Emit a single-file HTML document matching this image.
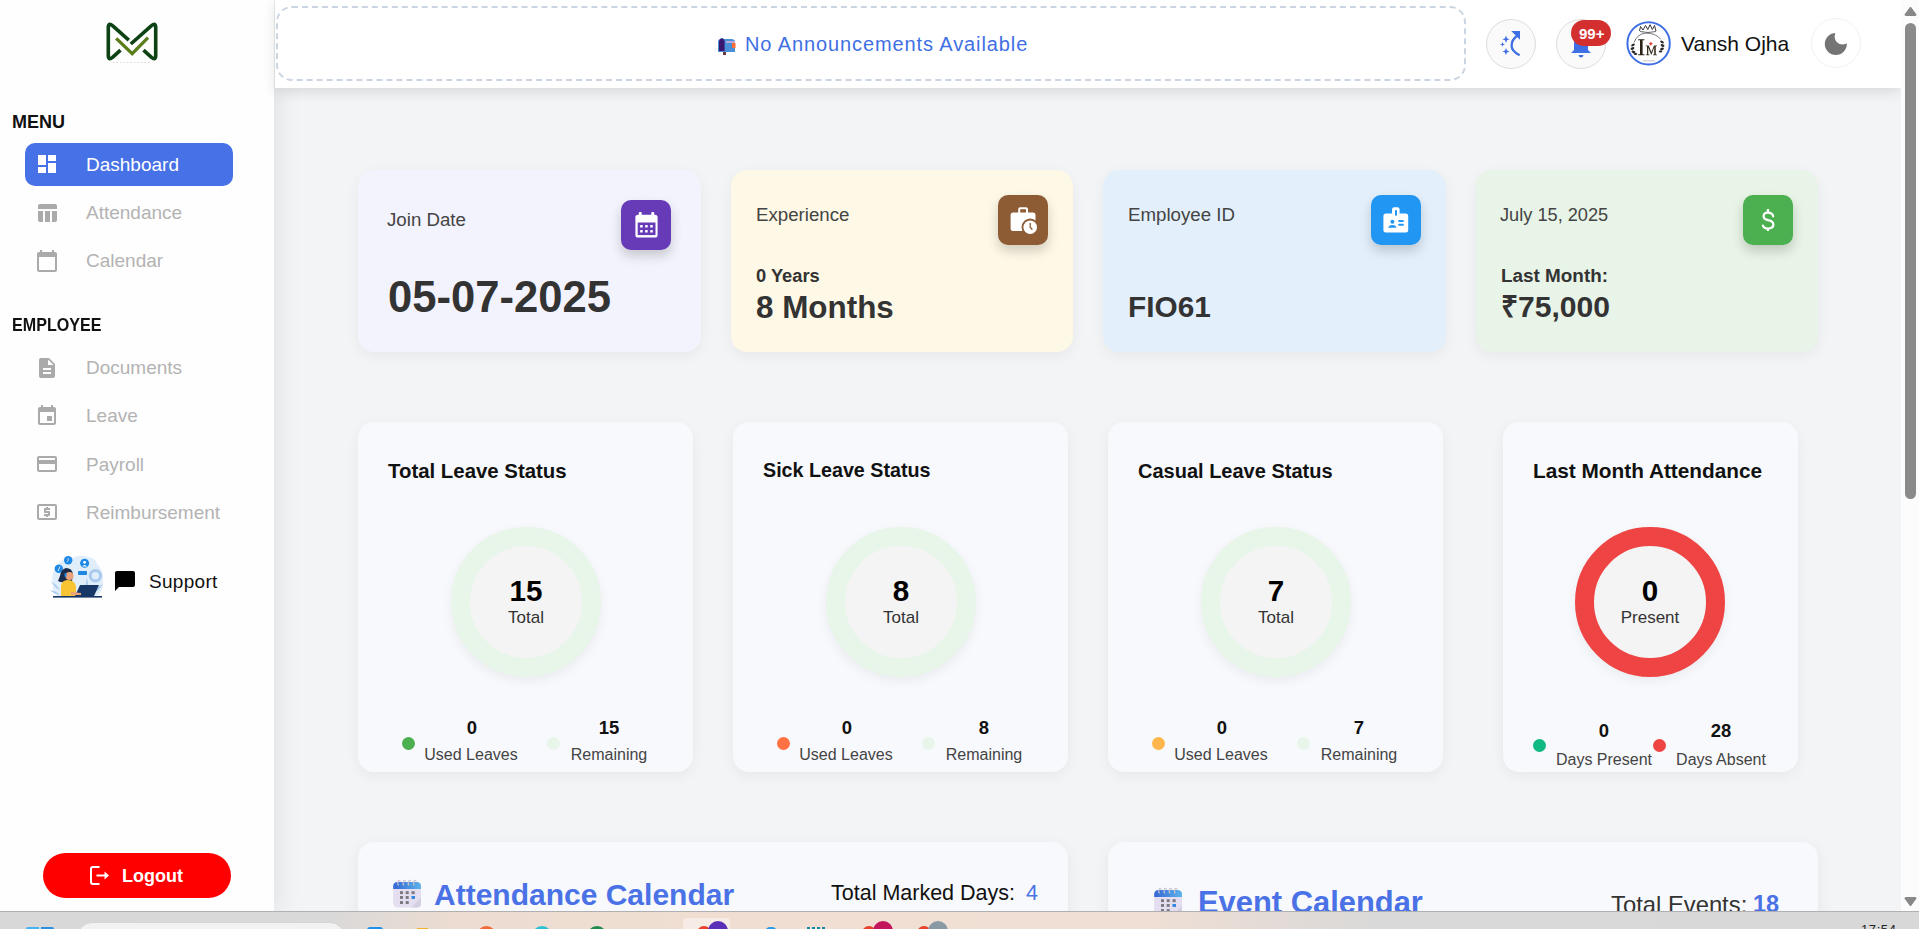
<!DOCTYPE html>
<html><head><meta charset="utf-8">
<style>
*{box-sizing:border-box;margin:0;padding:0}
html,body{width:1919px;height:929px;overflow:hidden}
body{position:relative;background:#f3f4f6;font-family:"Liberation Sans",sans-serif;color:#111}
.abs{position:absolute}
.t{position:absolute;white-space:nowrap;line-height:1}
#sidebar{position:absolute;left:0;top:0;width:274px;height:911px;background:#fefefe;box-shadow:3px 0 26px rgba(0,0,0,0.085);z-index:2}
#header{position:absolute;left:275px;top:0;width:1626px;height:88px;background:#fff;box-shadow:0 4px 12px rgba(0,0,0,0.11);z-index:3}
.nav{position:absolute;left:86px;font-size:19px;color:#b3b3b3;white-space:nowrap;line-height:1}
.ico{position:absolute;width:24px;height:24px}
.card{position:absolute;border-radius:16px;box-shadow:0 4px 14px rgba(0,0,0,0.05)}
.ibox{position:absolute;width:50px;height:50px;border-radius:10px;box-shadow:0 6px 12px rgba(0,0,0,0.18)}
.ctitle{font-size:18.7px;color:#444}
</style></head>
<body>
<div id="sidebar">
  <!-- logo -->
  <svg class="abs" style="left:106px;top:22px" width="53" height="41" viewBox="0 0 53 41">
    <g fill="none" stroke="#0d4314" stroke-width="3.6" stroke-linejoin="round">
      <path d="M22.8 18.2 L6.5 3.6 Q2.3 0.3 2.3 5.5 L2.3 33.5 Q2.3 38.7 6.5 35.4 L14.5 28.2"/>
      <path d="M24.8 22 L45.5 3.6 Q49.7 0.3 49.7 5.5 L49.7 33.5 Q49.7 38.7 45.5 35.4 L37.5 28.2"/>
    </g>
    <path d="M10.2 16.4 L26.2 31.6 L42 15.6" fill="none" stroke="#5b7d1c" stroke-width="3.3"/>
    <path d="M7 40.5 H44" stroke="#d0d0d0" stroke-width="0.8" stroke-dasharray="1.5 2"/>
  </svg>
  <div class="t" style="left:12px;top:113px;font-size:18px;font-weight:700;color:#111">MENU</div>
  <div class="abs" style="left:25px;top:143px;width:208px;height:43px;border-radius:10px;background:#4771e6"></div>
  <svg class="ico" style="left:35px;top:152px" viewBox="0 0 24 24"><path fill="#fff" d="M3 13h8V3H3v10zm0 8h8v-6H3v6zm10 0h8V11h-8v10zm0-18v6h8V3h-8z"/></svg>
  <div class="nav" style="top:155px;color:#fff">Dashboard</div>
  <svg class="ico" style="left:35px;top:201px" viewBox="0 0 24 24"><path fill="#aaa" d="M10 10.02h5V21h-5zM17 21h3c1.1 0 2-.9 2-2v-9h-5v11zm3-18H5c-1.1 0-2 .9-2 2v3h19V5c0-1.1-.9-2-2-2zM3 19c0 1.1.9 2 2 2h3V10H3v9z"/></svg>
  <div class="nav" style="top:203px">Attendance</div>
  <svg class="ico" style="left:35px;top:249px" viewBox="0 0 24 24"><path fill="#aaa" d="M20 3h-1V1h-2v2H7V1H5v2H4c-1.1 0-2 .9-2 2v16c0 1.1.9 2 2 2h16c1.1 0 2-.9 2-2V5c0-1.1-.9-2-2-2zm0 18H4V8h16v13z"/></svg>
  <div class="nav" style="top:251px">Calendar</div>

  <div class="t" style="left:11.5px;top:316px;font-size:18px;font-weight:700;color:#111;transform:scaleX(0.895);transform-origin:0 0">EMPLOYEE</div>
  <svg class="ico" style="left:35px;top:356px" viewBox="0 0 24 24"><path fill="#aaa" d="M14 2H6c-1.1 0-1.99.9-1.99 2L4 20c0 1.1.89 2 1.99 2H18c1.1 0 2-.9 2-2V8l-6-6zm2 16H8v-2h8v2zm0-4H8v-2h8v2zm-3-5V3.5L18.5 9H13z"/></svg>
  <div class="nav" style="top:358px">Documents</div>
  <svg class="ico" style="left:35px;top:404px" viewBox="0 0 24 24"><path fill="#aaa" d="M17 12h-5v5h5v-5zM16 1v2H8V1H6v2H5c-1.11 0-1.99.9-1.99 2L3 19c0 1.1.89 2 2 2h14c1.1 0 2-.9 2-2V5c0-1.1-.9-2-2-2h-1V1h-2zm3 18H5V8h14v11z"/></svg>
  <div class="nav" style="top:406px">Leave</div>
  <svg class="ico" style="left:35px;top:452px" viewBox="0 0 24 24"><path fill="#aaa" d="M20 4H4c-1.11 0-1.99.89-1.99 2L2 18c0 1.11.89 2 2 2h16c1.11 0 2-.89 2-2V6c0-1.11-.89-2-2-2zm0 14H4v-6h16v6zm0-10H4V6h16v2z"/></svg>
  <div class="nav" style="top:455px">Payroll</div>
  <svg class="ico" style="left:35px;top:500px" viewBox="0 0 24 24"><path fill="#aaa" d="M11 17h2v-1h1c.55 0 1-.45 1-1v-3c0-.55-.45-1-1-1h-3v-1h4V8h-2V7h-2v1h-1c-.55 0-1 .45-1 1v3c0 .55.45 1 1 1h3v1H9v2h2v1zm9-13H4c-1.11 0-1.990.89-1.99 2L2 18c0 1.11.89 2 2 2h16c1.11 0 2-.89 2-2V6c0-1.11-.89-2-2-2zm0 14H4V6h16v12z"/></svg>
  <div class="nav" style="top:503px">Reimbursement</div>

  <!-- support -->
  <svg class="abs" style="left:49px;top:554px" width="56" height="45" viewBox="0 0 56 45">
    <path d="M4 30 Q1 18 9 11 Q14 2 24 4 Q30 0 38 3 Q46 3 48 10 Q55 16 54 28 Q54 38 48 42 L8 42 Q3 38 4 30Z" fill="#dfeefa"/>
    <g fill="#a9c9ee"><path d="M2 27 Q8 31 11 36 Q6 34 2 27Z"/><path d="M1 36 Q7 37 11 41 Q5 40 1 36Z"/><path d="M54 30 Q48 33 45 38 Q50 37 54 30Z"/><path d="M38 24 Q36 30 37 35 Q40 30 38 24Z"/></g>
    <circle cx="19.2" cy="6.3" r="4.2" fill="#1e88e5"/>
    <path d="M19.2 4 V6.5 L18 8" stroke="#fff" stroke-width="0.7" fill="none"/>
    <circle cx="9.8" cy="14.8" r="4.2" fill="#1e88e5"/>
    <path d="M9 17 L11 12.5" stroke="#fff" stroke-width="0.8"/>
    <circle cx="35.6" cy="9.3" r="4.5" fill="#1e88e5"/>
    <circle cx="35.6" cy="8.3" r="1.4" fill="#fff"/><path d="M33 12.5 Q35.6 9.5 38.2 12.5Z" fill="#fff"/>
    <circle cx="46.4" cy="21.7" r="5.2" fill="none" stroke="#a9c9ee" stroke-width="3"/>
    <rect x="29" y="17" width="9" height="4" rx="0.8" fill="#1e88e5"/>
    <path d="M11 22 Q12 15 17 14 Q23 14 24 20 L23 27 L17 28 Q12 29 9 27Z" fill="#1b2a4a"/>
    <circle cx="20.5" cy="22" r="4" fill="#e9a27c"/>
    <rect x="15.5" y="19" width="2" height="4" rx="1" fill="#1e88e5"/>
    <path d="M12 33 Q12 26 19 26 Q26 26 27 33 L27 42 L12 42Z" fill="#f9c433"/>
    <path d="M31 31 L50 31 L45 42 L26 42Z" fill="#173866"/>
    <path d="M22 38 L32 39 L32 41 L22 41Z" fill="#e9a27c"/>
    <rect x="4" y="42" width="49" height="1.6" fill="#173866"/>
  </svg>

  <svg class="ico" style="left:113px;top:569px" viewBox="0 0 24 24"><path fill="#000" d="M20 2H4c-1.1 0-2 .9-2 2v18l4-4h14c1.1 0 2-.9 2-2V4c0-1.1-.9-2-2-2z"/></svg>
  <div class="t" style="left:149px;top:572px;font-size:19px;color:#111;letter-spacing:0.3px">Support</div>

  <!-- logout -->
  <div class="abs" style="left:43px;top:853px;width:188px;height:45px;border-radius:23px;background:#ff0000"></div>
  <svg class="abs" style="left:89px;top:865px" width="22" height="21" viewBox="0 0 22 21">
    <path d="M10.5 2 H4 Q2 2 2 4 V17 Q2 19 4 19 H10.5" fill="none" stroke="#fff" stroke-width="2"/>
    <path d="M7.5 10.5 H16" stroke="#fff" stroke-width="2"/>
    <path d="M15.5 6.5 L20 10.5 L15.5 14.5Z" fill="#fff"/>
  </svg>
  <div class="t" style="left:122px;top:867px;font-size:18px;font-weight:700;color:#fff">Logout</div>
</div>

<div id="header">
  <div class="abs" style="left:1px;top:6px;width:1190px;height:75px;border:2px dashed #cbd5e1;border-radius:16px"></div>
  <svg class="abs" style="left:442px;top:37px" width="19" height="18" viewBox="0 0 19 18">
    <path d="M3 2 Q5 0 7 2 L15 2 Q18 2.5 18 5 L18 15 L1 15 L1 5 Q1 2.5 3 2Z" fill="#4a90d9"/>
    <path d="M2 5 Q2 1.5 4.8 1.5 Q7.6 1.5 7.6 5 L7.6 14 L2 14Z" fill="#3b1670"/>
    <rect x="9" y="4" width="9" height="2" fill="#b8a9d9"/>
    <rect x="15" y="6" width="3.5" height="5" fill="#ff6b35"/>
    <rect x="6" y="15" width="3" height="4" fill="#6b3a3a"/>
  </svg>
  <div class="t" style="left:470px;top:34px;font-size:20px;color:#3f6fe4;letter-spacing:0.9px">No Announcements Available</div>

  <div class="abs" style="left:1211px;top:19px;width:50px;height:50px;border-radius:50%;background:#fafafa;border:1px solid #ddd"></div>
  <svg class="abs" style="left:1225px;top:30px" width="26" height="28" viewBox="0 0 26 28">
    <g fill="#3f6fe4">
      <path d="M6 5.5 L7 8.2 L9.5 9.2 L7 10.2 L6 13 L5 10.2 L2.5 9.2 L5 8.2Z"/>
      <path d="M2.5 12 L3.2 13.7 L5 14.3 L3.2 15 L2.5 16.7 L1.8 15 L0 14.3 L1.8 13.7Z"/>
      <path d="M6 18 L7 20.5 L9.5 21.5 L7 22.5 L6 25 L5 22.5 L2.5 21.5 L5 20.5Z"/>
      <path d="M11.2 1 H20 V9.8Z"/></g><path d="M17.5 5.5 Q11.6 9.8 11.6 15.5 Q11.6 21.2 19.6 25.3" fill="none" stroke="#3f6fe4" stroke-width="2.3"/><g>
    </g>
  </svg>

  <div class="abs" style="left:1281px;top:19px;width:50px;height:50px;border-radius:50%;background:#fafafa;border:1px solid #ddd"></div>
  <svg class="abs" style="left:1294px;top:31px" width="24" height="28" viewBox="0 0 24 28">
    <path fill="#3f6fe4" d="M12 3 Q5 3 5 11 L5 19 L2 22 L22 22 L19 19 L19 11 Q19 3 12 3Z M9.5 24 L14.5 24 Q14 26.5 12 26.5 Q10 26.5 9.5 24Z"/>
  </svg>
  <div class="abs" style="left:1296px;top:20px;width:40px;height:26px;border-radius:13px;background:#d32f2f"></div>
  <div class="t" style="left:1304px;top:26px;font-size:15px;font-weight:700;color:#fff">99+</div>

  <svg class="abs" style="left:1351px;top:21px" width="46" height="46" viewBox="0 0 46 46">
    <circle cx="22.6" cy="22.4" r="21.2" fill="#fff" stroke="#3f6fe4" stroke-width="2"/>
    <path d="M13.5 10 L14.5 5.5 L17 9 L19.5 4.5 L21.8 8.5 L24 3.7 L26.3 8.5 L28.5 4.5 L30 10" fill="none" stroke="#333" stroke-width="1"/>
    <path d="M14 10.5 Q22 12.5 30 10.5" fill="none" stroke="#444" stroke-width="0.8"/>
    <path d="M8 21.6 Q11 13 19.5 12.1 Q30 12 34.6 18.3" fill="none" stroke="#555" stroke-width="0.8"/>
    <g fill="#2a2a2a"><ellipse cx="7" cy="24" rx="2" ry="1.2" transform="rotate(-30 7 24)"/><ellipse cx="6.5" cy="27.5" rx="2" ry="1.2" transform="rotate(-20 6.5 27.5)"/><ellipse cx="7.5" cy="31" rx="2" ry="1.2" transform="rotate(20 7.5 31)"/><ellipse cx="9.5" cy="33" rx="1.8" ry="1.1"/>
    <ellipse cx="36" cy="21" rx="2" ry="1.2" transform="rotate(30 36 21)"/><ellipse cx="36.5" cy="24.5" rx="2" ry="1.2" transform="rotate(20 36.5 24.5)"/><ellipse cx="36" cy="28" rx="2" ry="1.2" transform="rotate(-20 36 28)"/><ellipse cx="34.5" cy="30.5" rx="1.8" ry="1.1"/></g>
    <path d="M12.2 18.3 H18.4 V19.2 H16.6 V33.3 H18.4 V34.2 H12.2 V33.3 H14 V19.2 H12.2Z" fill="#2b2416"/>
    <path d="M19.8 34.2 V33.5 H21 V25.3 H19.8 V24.4 H22.8 L25.4 31 L28 24.4 H31 V25.3 H29.8 V33.5 H31 V34.2 H27 V33.5 H28.2 V26.5 L25.6 33.5 H25 L22.3 26.5 V33.5 H23.5 V34.2Z" fill="#3a3020"/>
    <path d="M24.8 20.5 L25.6 22 L27 22.7 L25.6 23.4 L24.8 25 L24 23.4 L22.6 22.7 L24 22Z" fill="#e53935"/>
    <path d="M17 39.8 H29" stroke="#bbb" stroke-width="0.9"/>
  </svg>
  <div class="t" style="left:1406px;top:33px;font-size:21px;color:#111">Vansh Ojha</div>

  <div class="abs" style="left:1536px;top:18px;width:50px;height:50px;border-radius:50%;background:#fff;border:1px solid #f2f2f2"></div>
  <svg class="abs" style="left:1549px;top:32px" width="24" height="24" viewBox="0 0 24 24">
    <defs><mask id="mm"><rect width="24" height="24" fill="#fff"/><circle cx="18.6" cy="4.6" r="8" fill="#000"/></mask></defs>
    <circle cx="11.8" cy="12" r="11" fill="#747474" mask="url(#mm)"/>
  </svg>
</div>
<!-- scrollbar -->
<div class="abs" style="left:1901px;top:0;width:18px;height:911px;background:#fcfcfc;z-index:4">
  <svg class="abs" style="left:3px;top:6px" width="13" height="10" viewBox="0 0 13 10"><path d="M6.5 1 L12 8.5 Q12.3 9.5 11 9.5 L2 9.5 Q0.7 9.5 1 8.5Z" fill="#888" stroke="#888" stroke-width="1" stroke-linejoin="round"/></svg>
  <div class="abs" style="left:4px;top:23px;width:11px;height:476px;border-radius:5.5px;background:#8a8a8a"></div>
  <svg class="abs" style="left:3px;top:897px" width="13" height="10" viewBox="0 0 13 10"><path d="M6.5 9 L12 1.5 Q12.3 0.5 11 0.5 L2 0.5 Q0.7 0.5 1 1.5Z" fill="#888" stroke="#888" stroke-width="1" stroke-linejoin="round"/></svg>
</div>

<div id="main">
  <!-- row 1 -->
  <div class="card" style="left:358px;top:170px;width:343px;height:182px;background:#f3f3fd"></div>
  <div class="t ctitle" style="left:387px;top:211px">Join Date</div>
  <div class="ibox" style="left:621px;top:200px;background:#673ab7"></div>
  <svg class="abs" style="left:634.5px;top:212px" width="24" height="26" viewBox="0 0 24 26">
    <rect x="3.8" y="0" width="2.9" height="4" rx="0.8" fill="#fff"/><rect x="16.3" y="0" width="2.9" height="4" rx="0.8" fill="#fff"/>
    <rect x="0.4" y="2.7" width="22.2" height="22.8" rx="2.6" fill="#fff"/>
    <rect x="2.7" y="10.5" width="17.8" height="12.6" fill="#673ab7"/>
    <g fill="#fff"><rect x="5.1" y="12.9" width="2.6" height="2.6" rx="0.6"/><rect x="10.1" y="12.9" width="2.6" height="2.6" rx="0.6"/><rect x="15.2" y="12.9" width="2.6" height="2.6" rx="0.6"/><rect x="5.1" y="18" width="2.6" height="2.6" rx="0.6"/><rect x="10.1" y="18" width="2.6" height="2.6" rx="0.6"/><rect x="15.2" y="18" width="2.6" height="2.6" rx="0.6"/></g>
  </svg>
  <div class="t" style="left:388px;top:276px;font-size:43.6px;font-weight:700;color:#333">05-07-2025</div>

  <div class="card" style="left:731px;top:170px;width:342px;height:182px;background:#fef8e6"></div>
  <div class="t ctitle" style="left:756px;top:206px">Experience</div>
  <div class="ibox" style="left:998px;top:195px;background:#8d5c35"></div>
  <svg class="abs" style="left:1008px;top:205px" width="30" height="30" viewBox="0 0 30 30">
    <path fill="#fff" fill-rule="evenodd" d="M12.2 2.2H18Q20 2.2 20 4.2V7.5H25Q27.5 7.5 27.5 10V26.1H5.1Q2.6 26.1 2.6 23.6V10Q2.6 7.5 5.1 7.5H10.2V4.2Q10.2 2.2 12.2 2.2Z M12.2 4.3V7.5H18V4.3Z"/>
    <circle cx="22.2" cy="22.2" r="8.6" fill="#8d5c35"/>
    <circle cx="22.2" cy="22.2" r="6.8" fill="#fff"/>
    <path d="M22.2 18.5V22.3L24 24.3" stroke="#8d5c35" stroke-width="1.3" fill="none" stroke-linecap="round"/>
  </svg>
  <div class="t" style="left:756px;top:267px;font-size:18.3px;font-weight:700;color:#333">0 Years</div>
  <div class="t" style="left:756px;top:292px;font-size:31.4px;font-weight:700;color:#333">8 Months</div>

  <div class="card" style="left:1103px;top:170px;width:343px;height:182px;background:#e3f0fc"></div>
  <div class="t ctitle" style="left:1128px;top:206px">Employee ID</div>
  <div class="ibox" style="left:1371px;top:195px;background:#2196f3"></div>
  <svg class="abs" style="left:1383px;top:207px" width="26" height="26" viewBox="0 0 26 26">
    <rect x="0.4" y="6.6" width="24.8" height="18.9" rx="2.5" fill="#fff"/>
    <rect x="9" y="0.2" width="7.6" height="8" rx="2.2" fill="#fff"/>
    <rect x="12" y="3" width="2" height="5.8" rx="0.8" fill="#2196f3"/>
    <g fill="#2196f3"><circle cx="9.4" cy="14.8" r="2"/><path d="M5.2 20.8Q5.6 17.9 9.4 17.9Q13.2 17.9 13.4 20.8Z"/><rect x="15.4" y="13" width="5.3" height="1.9" rx="0.5"/><rect x="15.4" y="16.8" width="5.3" height="1.9" rx="0.5"/></g>
  </svg>
  <div class="t" style="left:1128px;top:292px;font-size:29.8px;font-weight:700;color:#333">FIO61</div>

  <div class="card" style="left:1476px;top:170px;width:342px;height:182px;background:#e8f4e7"></div>
  <div class="t ctitle" style="left:1500px;top:206px;font-size:18.2px">July 15, 2025</div>
  <div class="ibox" style="left:1743px;top:195px;background:#4caf50"></div>
  <svg class="abs" style="left:1760.5px;top:208px" width="16" height="25" viewBox="0 0 16 25">
    <rect x="5.8" y="1" width="2.3" height="4" fill="#fff"/><rect x="5.8" y="20" width="2.3" height="3" fill="#fff"/>
    <path d="M12.2 8.3Q11.4 4.6 6.9 4.6Q2.6 4.6 2.6 8.2Q2.6 11.2 7 12.1Q12.4 13.1 12.4 16.6Q12.4 20.5 7 20.5Q2.8 20.5 1.9 17.6" fill="none" stroke="#fff" stroke-width="2.2" stroke-linecap="round"/>
  </svg>
  <div class="t" style="left:1501px;top:267px;font-size:18.9px;font-weight:700;color:#333">Last Month:</div>
  <div class="t" style="left:1501px;top:292px;font-size:30.1px;font-weight:700;color:#333">&#8377;75,000</div>
  <!-- row 2 -->
  <div class="card" style="left:358px;top:422px;width:335px;height:350px;background:#f8f9fc"></div>
  <div class="t" style="left:388px;top:461px;font-size:20.4px;font-weight:700;color:#111">Total Leave Status</div>
  <div class="abs" style="left:451px;top:527px;width:150px;height:150px;border-radius:50%;border:19px solid #e8f5e9;background:#f4f4f4;box-shadow:0 4px 12px rgba(0,0,0,0.06)"></div>
  <div class="t" style="left:426px;top:576px;width:200px;text-align:center;font-size:29.6px;font-weight:700;color:#000">15</div>
  <div class="t" style="left:426px;top:609px;width:200px;text-align:center;font-size:17px;color:#333">Total</div>
  <div class="abs" style="left:402px;top:737px;width:13px;height:13px;border-radius:50%;background:#4caf50"></div>
  <div class="t" style="left:412px;top:719px;width:120px;text-align:center;font-size:18.5px;font-weight:700;color:#111">0</div>
  <div class="t" style="left:411px;top:747px;width:120px;text-align:center;font-size:16px;color:#444">Used Leaves</div>
  <div class="abs" style="left:547px;top:737px;width:13px;height:13px;border-radius:50%;background:#e8f5e9"></div>
  <div class="t" style="left:549px;top:719px;width:120px;text-align:center;font-size:18.5px;font-weight:700;color:#111">15</div>
  <div class="t" style="left:549px;top:747px;width:120px;text-align:center;font-size:16px;color:#444">Remaining</div>
  <div class="card" style="left:733px;top:422px;width:335px;height:350px;background:#f8f9fc"></div>
  <div class="t" style="left:763px;top:461px;font-size:19.7px;font-weight:700;color:#111">Sick Leave Status</div>
  <div class="abs" style="left:826px;top:527px;width:150px;height:150px;border-radius:50%;border:19px solid #e8f5e9;background:#f4f4f4;box-shadow:0 4px 12px rgba(0,0,0,0.06)"></div>
  <div class="t" style="left:801px;top:576px;width:200px;text-align:center;font-size:29.6px;font-weight:700;color:#000">8</div>
  <div class="t" style="left:801px;top:609px;width:200px;text-align:center;font-size:17px;color:#333">Total</div>
  <div class="abs" style="left:777px;top:737px;width:13px;height:13px;border-radius:50%;background:#ff7043"></div>
  <div class="t" style="left:787px;top:719px;width:120px;text-align:center;font-size:18.5px;font-weight:700;color:#111">0</div>
  <div class="t" style="left:786px;top:747px;width:120px;text-align:center;font-size:16px;color:#444">Used Leaves</div>
  <div class="abs" style="left:922px;top:737px;width:13px;height:13px;border-radius:50%;background:#e8f5e9"></div>
  <div class="t" style="left:924px;top:719px;width:120px;text-align:center;font-size:18.5px;font-weight:700;color:#111">8</div>
  <div class="t" style="left:924px;top:747px;width:120px;text-align:center;font-size:16px;color:#444">Remaining</div>
  <div class="card" style="left:1108px;top:422px;width:335px;height:350px;background:#f8f9fc"></div>
  <div class="t" style="left:1138px;top:461px;font-size:20px;font-weight:700;color:#111">Casual Leave Status</div>
  <div class="abs" style="left:1201px;top:527px;width:150px;height:150px;border-radius:50%;border:19px solid #e8f5e9;background:#f4f4f4;box-shadow:0 4px 12px rgba(0,0,0,0.06)"></div>
  <div class="t" style="left:1176px;top:576px;width:200px;text-align:center;font-size:29.6px;font-weight:700;color:#000">7</div>
  <div class="t" style="left:1176px;top:609px;width:200px;text-align:center;font-size:17px;color:#333">Total</div>
  <div class="abs" style="left:1152px;top:737px;width:13px;height:13px;border-radius:50%;background:#ffb74d"></div>
  <div class="t" style="left:1162px;top:719px;width:120px;text-align:center;font-size:18.5px;font-weight:700;color:#111">0</div>
  <div class="t" style="left:1161px;top:747px;width:120px;text-align:center;font-size:16px;color:#444">Used Leaves</div>
  <div class="abs" style="left:1297px;top:737px;width:13px;height:13px;border-radius:50%;background:#e8f5e9"></div>
  <div class="t" style="left:1299px;top:719px;width:120px;text-align:center;font-size:18.5px;font-weight:700;color:#111">7</div>
  <div class="t" style="left:1299px;top:747px;width:120px;text-align:center;font-size:16px;color:#444">Remaining</div>
  <div class="card" style="left:1503px;top:422px;width:295px;height:350px;background:#f8f9fc"></div>
  <div class="t" style="left:1533px;top:461px;font-size:20.8px;font-weight:700;color:#111">Last Month Attendance</div>
  <div class="abs" style="left:1575px;top:527px;width:150px;height:150px;border-radius:50%;border:19px solid #ef4444;background:#f4f4f4;box-shadow:0 4px 12px rgba(0,0,0,0.06)"></div>
  <div class="t" style="left:1550px;top:576px;width:200px;text-align:center;font-size:29.6px;font-weight:700;color:#000">0</div>
  <div class="t" style="left:1550px;top:609px;width:200px;text-align:center;font-size:17px;color:#333">Present</div>
  <div class="abs" style="left:1533px;top:739px;width:13px;height:13px;border-radius:50%;background:#10b981"></div>
  <div class="t" style="left:1544px;top:722px;width:120px;text-align:center;font-size:18.5px;font-weight:700;color:#111">0</div>
  <div class="t" style="left:1544px;top:752px;width:120px;text-align:center;font-size:16px;color:#444">Days Present</div>
  <div class="abs" style="left:1653px;top:739px;width:13px;height:13px;border-radius:50%;background:#ef4444"></div>
  <div class="t" style="left:1661px;top:722px;width:120px;text-align:center;font-size:18.5px;font-weight:700;color:#111">28</div>
  <div class="t" style="left:1661px;top:752px;width:120px;text-align:center;font-size:16px;color:#444">Days Absent</div>
  <!-- row 3 -->
  <div class="card" style="left:358px;top:842px;width:710px;height:300px;background:#f8f9fc;box-shadow:0 4px 16px rgba(0,0,0,0.06)"></div>
  <svg class="abs" style="left:392px;top:877px" width="30" height="31" viewBox="0 0 30 31">
    <defs><linearGradient id="g392" x1="0" x2="1"><stop offset="0" stop-color="#3567d4"/><stop offset="1" stop-color="#5db3ea"/></linearGradient></defs>
    <rect x="1.2" y="4.9" width="27.8" height="25.6" rx="4.5" fill="#e4def0"/>
    <path d="M1.2 12V9.4Q1.2 4.9 5.7 4.9H24.5Q29 4.9 29 9.4V12Z" fill="url(#g392)"/>
    <g fill="none" stroke="#c9c4cf" stroke-width="1.1"><path d="M6.5 8.5Q4.8 6 6.5 3.5Q8 3 8.3 4.5"/><path d="M11.8 8.5Q10.1 6 11.8 3.5Q13.3 3 13.6 4.5"/><path d="M17 8.5Q15.3 6 17 3.5Q18.5 3 18.8 4.5"/><path d="M22.3 8.5Q20.6 6 22.3 3.5Q23.8 3 24.1 4.5"/></g>
    <g fill="#7a7a80"><rect x="8" y="14.2" width="3" height="2.9"/><rect x="13.7" y="14.2" width="3" height="2.9"/><rect x="19.5" y="14.2" width="3.2" height="2.9"/><rect x="8" y="19" width="3" height="2.9"/><rect x="13.7" y="19" width="3" height="2.9"/><rect x="8" y="24.1" width="3" height="2.9"/><rect x="13.7" y="24.1" width="3" height="2.9"/></g>
    <rect x="19.5" y="19" width="3.5" height="2.9" fill="#2f86e0"/>
    <path d="M29 20.5 L19.5 30.5 H25 Q29 30.5 29 26.5Z" fill="#d5cfe3"/>
  </svg>
  <div class="t" style="left:434px;top:880px;font-size:30px;font-weight:700;color:#4a72e6">Attendance Calendar</div>
  <div class="t" style="left:831px;top:883px;font-size:21.5px;color:#111">Total Marked Days:</div>
  <div class="t" style="left:1026px;top:883px;font-size:21.5px;color:#4a72e6">4</div>

  <div class="card" style="left:1108px;top:842px;width:710px;height:300px;background:#f8f9fc;box-shadow:0 4px 16px rgba(0,0,0,0.06)"></div>
  <svg class="abs" style="left:1153px;top:885px" width="30" height="31" viewBox="0 0 30 31">
    <defs><linearGradient id="g1153" x1="0" x2="1"><stop offset="0" stop-color="#3567d4"/><stop offset="1" stop-color="#5db3ea"/></linearGradient></defs>
    <rect x="1.2" y="4.9" width="27.8" height="25.6" rx="4.5" fill="#e4def0"/>
    <path d="M1.2 12V9.4Q1.2 4.9 5.7 4.9H24.5Q29 4.9 29 9.4V12Z" fill="url(#g1153)"/>
    <g fill="none" stroke="#c9c4cf" stroke-width="1.1"><path d="M6.5 8.5Q4.8 6 6.5 3.5Q8 3 8.3 4.5"/><path d="M11.8 8.5Q10.1 6 11.8 3.5Q13.3 3 13.6 4.5"/><path d="M17 8.5Q15.3 6 17 3.5Q18.5 3 18.8 4.5"/><path d="M22.3 8.5Q20.6 6 22.3 3.5Q23.8 3 24.1 4.5"/></g>
    <g fill="#7a7a80"><rect x="8" y="14.2" width="3" height="2.9"/><rect x="13.7" y="14.2" width="3" height="2.9"/><rect x="19.5" y="14.2" width="3.2" height="2.9"/><rect x="8" y="19" width="3" height="2.9"/><rect x="13.7" y="19" width="3" height="2.9"/><rect x="8" y="24.1" width="3" height="2.9"/><rect x="13.7" y="24.1" width="3" height="2.9"/></g>
    <rect x="19.5" y="19" width="3.5" height="2.9" fill="#2f86e0"/>
    <path d="M29 20.5 L19.5 30.5 H25 Q29 30.5 29 26.5Z" fill="#d5cfe3"/>
  </svg>
  <div class="t" style="left:1198px;top:888px;font-size:30.9px;font-weight:700;color:#4a72e6">Event Calendar</div>
  <div class="t" style="left:1611px;top:893px;font-size:23.8px;color:#333">Total Events:</div><div class="t" style="left:1753px;top:893px;font-size:23.5px;font-weight:700;color:#4a72e6">18</div>
</div>
<div id="taskbar" class="abs" style="left:0;top:911px;width:1919px;height:18px;background:linear-gradient(90deg,#d8d8d8 0%,#d9d9d9 17%,#eddcd1 24%,#f1dfd3 45%,#efdfd5 60%,#e4dbd6 66%,#d9d9d9 72%,#d8d8d8 100%);border-top:1px solid #b0b0b0;z-index:10;overflow:hidden">
  <div class="abs" style="left:26px;top:15px;width:13px;height:10px;background:#46b4f0;border-radius:2px 0 0 0"></div>
  <div class="abs" style="left:41px;top:15px;width:13px;height:10px;background:#2d8fe0;border-radius:0 2px 0 0"></div>
  <div class="abs" style="left:77px;top:10px;width:268px;height:30px;border-radius:15px;background:#f2f2f2;border:1px solid #d5d5d5"></div>
  <div class="abs" style="left:367px;top:15px;width:16px;height:10px;border-radius:3px;background:#1e90e8"></div>
  <div class="abs" style="left:417px;top:16px;width:11px;height:10px;background:#f0b429"></div>
  <div class="abs" style="left:477px;top:14px;width:19px;height:19px;border-radius:50%;background:#f26a3a"></div>
  <div class="abs" style="left:532px;top:14px;width:20px;height:20px;border-radius:50%;background:#2cc0d0"></div>
  <div class="abs" style="left:587px;top:14px;width:20px;height:20px;border-radius:50%;background:#1f8a4c"></div>
  <div class="abs" style="left:683px;top:6px;width:47px;height:20px;border-radius:4px;background:#f7ebe5"></div>
  <div class="abs" style="left:697px;top:14px;width:14px;height:14px;border-radius:50%;background:#e8402a"></div>
  <div class="abs" style="left:708px;top:9px;width:20px;height:20px;border-radius:50%;background:#5b2fb8"></div>
  <div class="abs" style="left:765px;top:15px;width:12px;height:10px;border-radius:5px;background:#2a9ae8"></div>
  <div class="abs" style="left:807px;top:15px;width:20px;height:6px;background:repeating-linear-gradient(90deg,#0f8aa8 0 3px,transparent 3px 5px)"></div>
  <div class="abs" style="left:862px;top:14px;width:14px;height:14px;border-radius:50%;background:#e8402a"></div>
  <div class="abs" style="left:873px;top:9px;width:20px;height:20px;border-radius:50%;background:#c2185b"></div>
  <div class="abs" style="left:917px;top:14px;width:14px;height:14px;border-radius:50%;background:#e8402a"></div>
  <div class="abs" style="left:928px;top:9px;width:20px;height:20px;border-radius:50%;background:#8a9aa5"></div>
  <div class="t" style="left:1861px;top:11px;font-size:13px;color:#222;letter-spacing:0.6px">17:54</div>
</div>

</body></html>
